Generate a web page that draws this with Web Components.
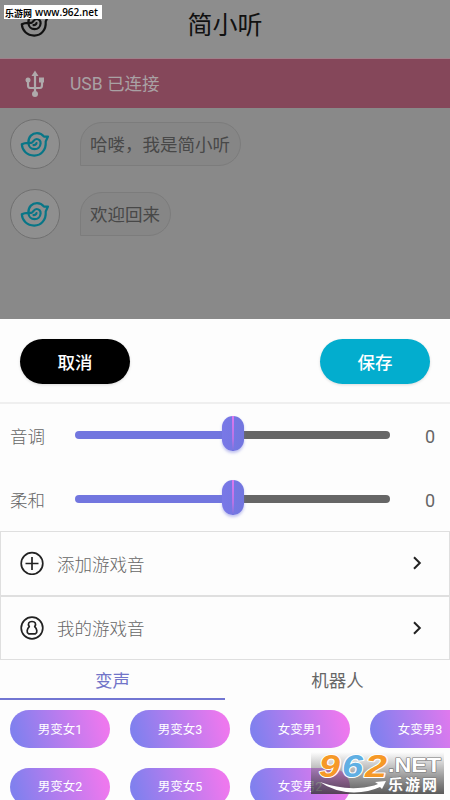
<!DOCTYPE html>
<html lang="zh-CN">
<head>
<meta charset="utf-8">
<title>简小听</title>
<style>
html,body{margin:0;width:450px;height:800px;overflow:hidden;background:#fdfdfd}
body{font-family:Roboto,"Noto Sans CJK SC",sans-serif;font-size:17.5px;color:#666}
</style>
</head>
<body>
<voice-app></voice-app>
<script>
function define(name, html) {
  const t = document.createElement('template');
  t.innerHTML = html;
  customElements.define(name, class extends HTMLElement {
    constructor() {
      super();
      this.attachShadow({mode: 'open'}).appendChild(t.content.cloneNode(true));
    }
  });
}

define('bird-icon', `<style>:host{display:block;width:30px;height:26px}svg{display:block}</style>
<svg width="30" height="26" viewBox="0 0 30 26" fill="none" stroke="currentColor" stroke-width="2.2" stroke-linejoin="round" stroke-linecap="round">
<path d="M8.300 11.800C8.300 5.500 12.300 2.200 17 2.200C20.300 2.200 22.500 3.700 24 5.600L28 5.500L25.700 10.500C26.300 18.800 21.300 24.600 14.200 24.600C7 24.600 2.200 19.600 1.800 13.300C4 11.900 6 11.800 8.500 11.800H11.300C13.400 11.500 13.500 8 16.500 8C19.100 8 20.800 10 20.600 12.500C20.300 16 17.700 18.200 14.500 18.200C11.200 18.200 8.800 15.500 8.500 12.600"/><path d="M13.500 14.100C15.500 14.100 16.400 13.300 16.500 12"/></svg>`);

define('app-header', `<style>:host{display:grid;grid-template-columns:70px 1fr 70px;align-items:center;height:58px;background:#8d8d8d;color:#111}
bird-icon{margin:-10px 0 0 20px}h1{margin:-7px 0 0;font:400 25px/34px Roboto,"Noto Sans CJK SC",sans-serif;text-align:center}</style>
<bird-icon></bird-icon><h1><slot></slot></h1>`);

define('usb-bar', `<style>:host{display:flex;align-items:center;box-sizing:border-box;height:50px;background:#85475a;border-top:1px solid #a0808a;padding-left:25px;gap:25px;color:#a9a1a4}
svg{display:block}span{line-height:24px}</style>
<svg width="20" height="28" viewBox="0 0 20 28" fill="none" stroke="#afa9ab" stroke-width="2.2"><path d="M10 4V24M3 11V15Q3 18 5 18H15Q17 18 17 15V11"/><g fill="#afa9ab" stroke="none"><path d="M10 .5L13.500 6H6.500Z"/><circle cx="3" cy="10" r="2.500"/><path d="M14 7.500H19V12.500H14Z"/><circle cx="10" cy="24" r="3"/></g></svg><span><slot></slot></span>`);

define('chat-message', `<style>:host{display:flex;gap:20px;height:50px;align-items:center}
.a{box-sizing:border-box;width:50px;height:50px;border:1px solid #707070;border-radius:50%;background:#8f8f8f;color:#087687;display:grid;place-items:center}
.b{box-sizing:border-box;height:44px;border:1px solid #7c7c7c;border-radius:22px 22px 22px 0;background:#868686;padding:1px 9.5px 0 9px;line-height:42px;color:#484848}</style>
<div class="a"><bird-icon></bird-icon></div><div class="b"><slot></slot></div>`);

define('pill-button', `<style>:host{display:grid;place-items:center;width:110px;height:45px;border-radius:23px;background:var(--fill);color:#fff;font-weight:500;box-shadow:0 1px 3px #0002}</style><slot></slot>`);

define('value-slider', `<style>:host{display:grid;grid-template-columns:65px 315px 1fr;height:64px;align-items:center}
.l{padding-top:1px;font-weight:300}.v{padding:3px 0 0;text-align:right;font-size:18px}
.t{display:flex;align-items:center;justify-content:center;height:7.500px;border-radius:4px;background:linear-gradient(90deg,#7276df 50%,#666 50%)}
.k{flex:none;width:22px;height:35px;border-radius:11px;margin-top:-3px;background:linear-gradient(90deg,#7978e7,#7276df);box-shadow:0 2px 3px #7276df70;display:grid;justify-content:center}
.k i{width:2px;height:35px;background:linear-gradient(#dc78ee,#b674e5 65%,#7276df)}</style>
<span class="l"><slot></slot></span><div class="t"><div class="k"><i></i></div></div><span class="v"><slot name="value"></slot></span>`);

define('list-cell', `<style>:host{display:flex;box-sizing:border-box;height:64.500px;align-items:center;border:1px solid #dfdfdf;padding:0 27px 0 19px;color:#666}
.i,.c{display:block}.i{width:24px;height:24px}span{margin-left:13px;flex:1;font-weight:300}</style>
<div class="i"><slot name="icon"></slot></div><span><slot></slot></span>
<svg class="c" width="10" height="14" viewBox="0 0 10 14" fill="none" stroke="#222" stroke-width="2"><path d="M2 1.200L7.800 7L2 12.800"/></svg>`);

define('tab-item', `<style>:host{flex:1;box-sizing:border-box;height:40px;text-align:center;line-height:43px;border-bottom:2.500px solid transparent}:host([active]){color:#7174c8;border-color:#7276d2}</style><slot></slot>`);

define('voice-pill', `<style>:host{display:grid;place-items:center;box-sizing:border-box;padding-bottom:2px;width:100px;height:38px;border-radius:19px;background:linear-gradient(75deg,#8180ee 8%,#ed78ee 92%);color:#fff;font-size:12.500px}</style><slot></slot>`);

define('site-mark', `<style>:host{position:absolute;left:4px;top:5px;width:98px;height:14px;background:#fff;overflow:hidden}svg{display:block}</style>
<svg width="98" height="14" font-family="'Open Sans','Noto Sans CJK SC',sans-serif" font-weight="600" fill="#000" font-size="10.500"><text x="1" y="11.500" font-size="9" textLength="27" lengthAdjust="spacingAndGlyphs">乐游网</text><text x="31" y="11" textLength="63" lengthAdjust="spacingAndGlyphs">www.962.net</text></svg>`);

define('site-logo', `<style>:host{position:absolute;left:311px;top:740px;width:133px;height:60px;background:linear-gradient(#fff4,#5559 60%,#333c) 0 12px/133px 42px no-repeat}svg{display:block}</style>
<svg width="133" height="60" viewBox="0 -12 133 60" font-family="'Liberation Sans','Noto Sans CJK SC',sans-serif" font-weight="700" paint-order="stroke" stroke-linejoin="round">
<g font-size="31" font-style="italic" stroke="#fff" stroke-width="2"><text x="8" y="24.500" fill="#f69927" textLength="21" lengthAdjust="spacingAndGlyphs">9</text><text x="31" y="24.500" fill="#60afe3" textLength="21" lengthAdjust="spacingAndGlyphs">6</text><text x="54" y="24.500" fill="#f69927" textLength="22" lengthAdjust="spacingAndGlyphs">2</text></g>
<g fill="#fff" stroke="#777" stroke-width="1.200"><text x="77" y="20" font-size="20" textLength="53" lengthAdjust="spacingAndGlyphs">.NET</text><text x="77" y="37.500" font-size="15" textLength="49" lengthAdjust="spacing">乐游网</text></g>
<path d="M9 30Q28 37 47 36Q60 35 67 32L64 30L75 29L71 37L69 35Q58 40 43 40.500Q23 40 9 30Z" fill="#fff"/></svg>`);

define('voice-app', `<style>:host{display:flex;flex-direction:column;position:relative;width:450px;height:800px;overflow:hidden}
.chat{display:flex;flex-direction:column;gap:20px;box-sizing:border-box;height:211px;padding:11px 10px;background:#898989}
.sheet{height:481px;background:#fdfdfd}
.actions{box-sizing:border-box;height:85px;padding:20px;display:flex;justify-content:space-between;border-bottom:2px solid #efefef}
.sliders{box-sizing:border-box;height:127px;padding:0 15px 0 10px;margin-top:-1px;margin-bottom:1px}
.tabs{display:flex}
.voices{display:grid;grid-template-columns:repeat(4,100px);gap:19.500px 20px;padding:10px;width:460px}
list-cell svg{display:block}</style>
<app-header>简小听</app-header><usb-bar>USB 已连接</usb-bar>
<div class="chat"><chat-message>哈喽，我是简小听</chat-message><chat-message>欢迎回来</chat-message></div>
<div class="sheet"><div class="actions"><pill-button style="--fill:#000">取消</pill-button><pill-button style="--fill:#03adce">保存</pill-button></div>
<div class="sliders"><value-slider>音调<span slot="value">0</span></value-slider><value-slider>柔和<span slot="value">0</span></value-slider></div>
<list-cell><svg slot="icon" width="24" height="24" fill="none" stroke="#222" stroke-width="1.700"><circle cx="12" cy="12.500" r="10.800"/><path d="M5.500 12.500H18.500M12 6V19"/></svg>添加游戏音</list-cell>
<list-cell><svg slot="icon" width="24" height="24" fill="none" stroke="#222" stroke-width="1.700"><circle cx="12" cy="12" r="10.800"/><path stroke-linejoin="round" d="M9.300 10.700C7.300 7.500 9 5.500 12 5.500S16.700 7.500 14.700 10.700C16.900 12.800 17.900 16.500 15.400 17.800H8.600C6.100 16.500 7.100 12.800 9.300 10.700Z"/></svg>我的游戏音</list-cell>
<div class="tabs"><tab-item active>变声</tab-item><tab-item>机器人</tab-item></div>
<div class="voices"><voice-pill>男变女1</voice-pill><voice-pill>男变女3</voice-pill><voice-pill>女变男1</voice-pill><voice-pill>女变男3</voice-pill><voice-pill>男变女2</voice-pill><voice-pill>男变女5</voice-pill><voice-pill>女变男2</voice-pill></div></div>
<site-mark></site-mark><site-logo></site-logo>`);
</script>
</body>
</html>
